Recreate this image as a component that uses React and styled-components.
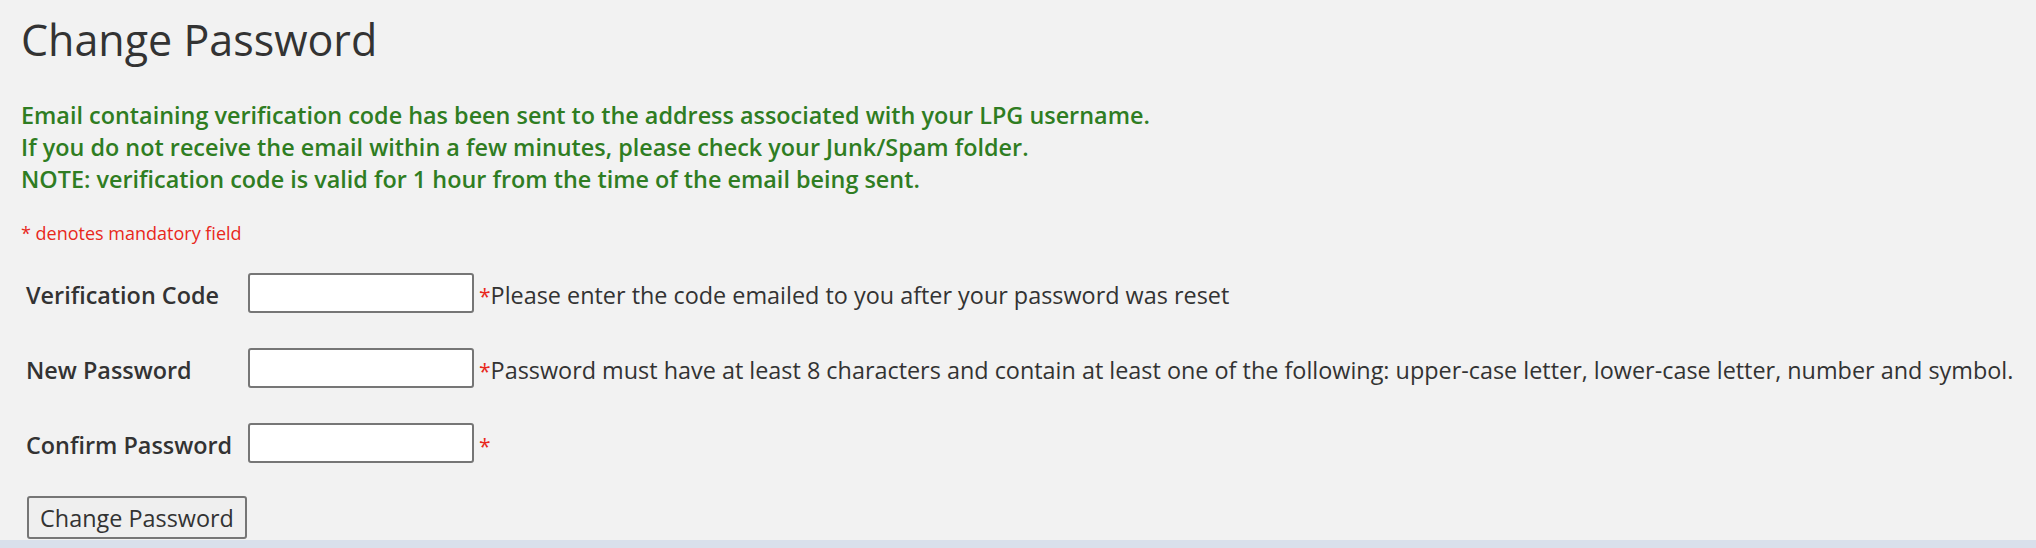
import React from "react";
import styled, { createGlobalStyle } from "styled-components";

const GlobalStyle = createGlobalStyle`
  html, body {
    margin: 0;
    padding: 0;
    background: #f2f2f2;
  }
  body {
    font-family: "Open Sans", "Liberation Sans", Arial, sans-serif;
    color: #333333;
  }
`;

const Page = styled.div`
  display: flex;
  flex-direction: column;
  width: 100%;
`;

const Content = styled.main`
  height: 540px;
  overflow: hidden;
  padding: 0 0 0 21px;
  box-sizing: border-box;
`;

const Footer = styled.footer`
  height: 8px;
  background: #d9e0eb;
`;

const Title = styled.h1`
  margin: 11px 0 0;
  font-size: 43px;
  font-weight: 400;
  line-height: 57px;
  color: #333333;
`;

const Notice = styled.div`
  margin-top: 31px;
  font-size: 23.4px;
  font-weight: 600;
  line-height: 32px;
  color: #2f7d22;
`;

const Mandatory = styled.div`
  margin-top: 26px;
  font-size: 18px;
  line-height: 24px;
  color: #e8281c;
`;

const Form = styled.form`
  display: flex;
  flex-direction: column;
  margin-top: 28px;
`;

const Row = styled.div`
  display: flex;
  align-items: center;
  height: 40px;
  margin-bottom: 35px;
`;

const Label = styled.label`
  width: 227px;
  padding: 4px 0 0 5px;
  box-sizing: border-box;
  font-size: 23.4px;
  font-weight: 600;
  color: #333333;
  flex-shrink: 0;
`;

const Input = styled.input`
  width: 226px;
  height: 40px;
  box-sizing: border-box;
  border: 2px solid #767676;
  border-radius: 3px;
  background: #ffffff;
  padding: 2px 6px;
  font-family: inherit;
  font-size: 18px;
  flex-shrink: 0;
`;

const Hint = styled.span`
  margin-left: 5px;
  padding-top: 4px;
  font-size: 23.4px;
  color: #333333;
  white-space: nowrap;
`;

const Star = styled.span`
  color: #e8281c;
  font-size: 21px;
`;

const Submit = styled.button`
  align-self: flex-start;
  margin-left: 6px;
  margin-top: -2px;
  width: 220px;
  height: 43px;
  box-sizing: border-box;
  border: 2px solid #767676;
  border-radius: 3px;
  background: #efefef;
  font-family: inherit;
  font-size: 23.4px;
  color: #333333;
  padding: 0 6px;
`;

const fields = [
  {
    id: "code",
    label: "Verification Code",
    type: "text",
    hint: "Please enter the code emailed to you after your password was reset",
  },
  {
    id: "newpw",
    label: "New Password",
    type: "password",
    hint:
      "Password must have at least 8 characters and contain at least one of the following: upper-case letter, lower-case letter, number and symbol.",
  },
  { id: "confirm", label: "Confirm Password", type: "password", hint: "" },
];

export default function App() {
  return (
    <Page>
      <GlobalStyle />
      <Content>
        <Title>Change Password</Title>
        <Notice>
          Email containing verification code has been sent to the address associated with your LPG username.
          <br />
          If you do not receive the email within a few minutes, please check your Junk/Spam folder.
          <br />
          NOTE: verification code is valid for 1 hour from the time of the email being sent.
        </Notice>
        <Mandatory>* denotes mandatory field</Mandatory>
        <Form onSubmit={(e) => e.preventDefault()}>
          {fields.map((f) => (
            <Row key={f.id}>
              <Label htmlFor={f.id}>{f.label}</Label>
              <Input id={f.id} type={f.type} />
              <Hint>
                <Star>*</Star>
                {f.hint}
              </Hint>
            </Row>
          ))}
          <Submit type="submit">Change Password</Submit>
        </Form>
      </Content>
      <Footer />
    </Page>
  );
}
